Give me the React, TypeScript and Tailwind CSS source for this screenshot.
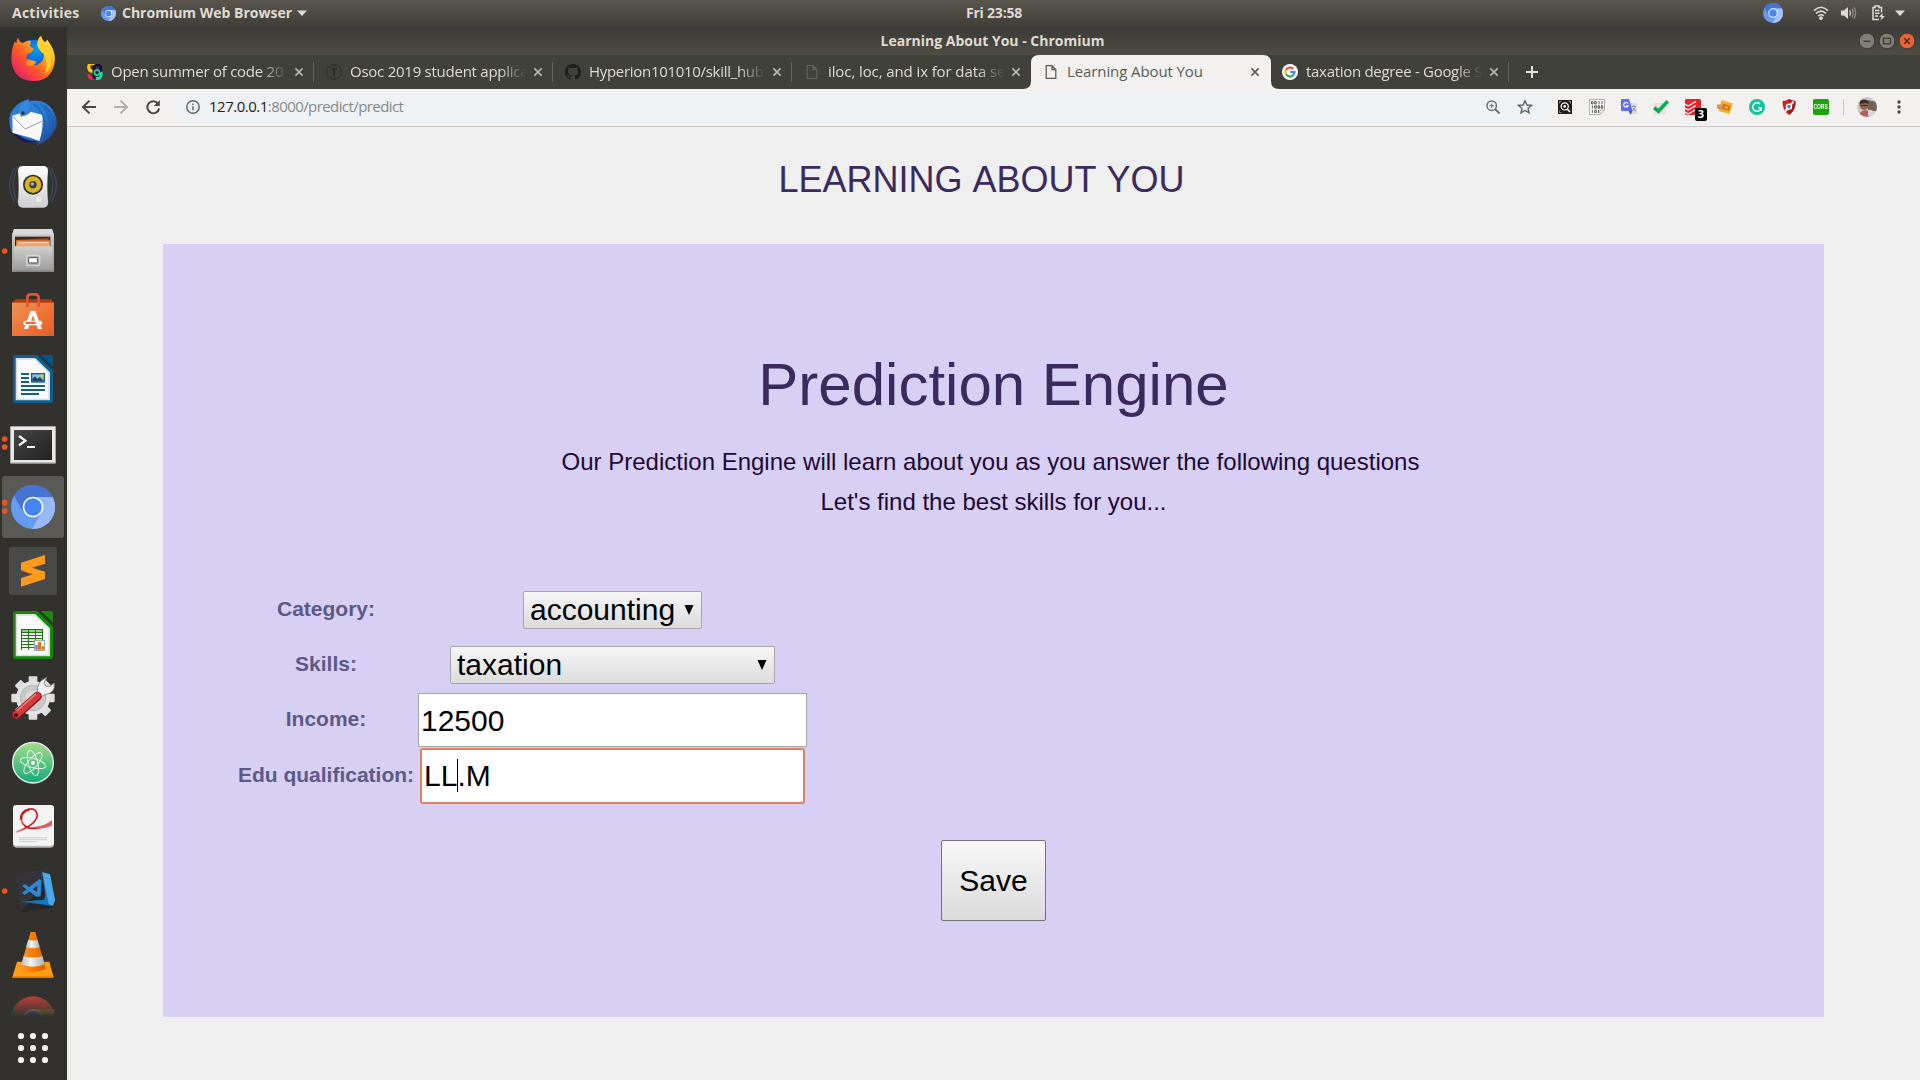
import React from "react";

const ubuntu = "font-['Open_Sans','Noto_Sans',sans-serif]";
const arial = "font-['Liberation_Sans',Arial,sans-serif]";

function ChromiumMark({ className }: { className: string }) {
  return (
    <svg viewBox="0 0 132 132" className={className}>
      <circle cx="66" cy="66" r="66" fill="#669bf2" />
      <path d="M9 32 A66 66 0 0 1 125 36 H66 L37 82Z" fill="#4674d3" />
      <path d="M125 36 A66 66 0 0 1 63 132 L93 80 L77 36Z" fill="#a4c3f8" />
      <circle cx="66" cy="66" r="31" fill="#fff" />
      <circle cx="66" cy="66" r="25" fill="#4786f0" />
    </svg>
  );
}

function Slot({ dots = [], active = false, children }: { dots?: number[]; active?: boolean; children: React.ReactNode }) {
  return (
    <svg viewBox="0 0 201 192" className="block h-16 w-[67px] shrink-0">
      {active && <rect x="6" y="3" width="186" height="186" rx="10" fill="#5a5954" />}
      {dots.map((y) => (
        <circle key={y} cx="14" cy={y} r="8.5" fill="#e95420" />
      ))}
      {children}
    </svg>
  );
}

function Doc({ a, b, children }: { a: string; b: string; children: React.ReactNode }) {
  return (
    <>
      <path d="M47 24 H112 L159 70 V160 Q159 168 151 168 H47 Q39 168 39 160 V32 Q39 24 47 24Z" fill={a} />
      <path d="M122 24 H154 Q159 24 159 29 V60 Z" fill={b} />
      <path d="M112 24 H122 L159 60 V70Z" fill="#33312d" />
      <path d="M47 33 H106 L150 76 V160 H47Z" fill="#dcdcdc" />
      <path d="M52 38 H104 L145 78 V155 H52Z" fill="#fafafa" />
      {children}
    </>
  );
}

function Dock() {
  return (
    <aside className="flex w-[67px] shrink-0 flex-col bg-[#33312d]">
      <Slot>
        <defs>
          <linearGradient id="ff" x1="1" y1="0" x2="0.1" y2="0.9">
            <stop offset="0" stopColor="#fff44f" />
            <stop offset="0.35" stopColor="#ffb01a" />
            <stop offset="0.65" stopColor="#ff5a2b" />
            <stop offset="1" stopColor="#e8196b" />
          </linearGradient>
          <radialGradient id="ffb" cx="0.6" cy="0.3" r="0.7">
            <stop offset="0" stopColor="#00a5f5" />
            <stop offset="0.6" stopColor="#0a5fd8" />
            <stop offset="1" stopColor="#39207c" />
          </radialGradient>
        </defs>
        <circle cx="99" cy="88" r="50" fill="url(#ffb)" />
        <path d="M50 48 Q49 38 54 32 Q58 46 70 48 Q80 40 93 42 L90 58 L101 66 L95 76 L82 82 L78 94 Q90 96 100 102 Q90 114 112 114 Q136 100 131 78 Q108 62 112 44 Q115 32 123 27 Q126 40 136 46 Q138 42 142 38 Q165 68 165 96 Q160 162 99 162 Q37 160 34 96 Q34 66 44 44Z" fill="url(#ff)" />
        <path d="M112 50 Q114 34 123 27 Q126 42 138 50 Q158 74 155 112 Q148 132 136 140 Q145 104 131 82 Q112 66 112 50Z" fill="#ffd52e" opacity=".8" />
        <path d="M78 106 Q92 94 110 104 Q98 122 80 113Z" fill="#ff9b1f" />
      </Slot>
      <Slot>
        <defs>
          <linearGradient id="tb" x1="0" y1="0" x2="1" y2="1">
            <stop offset="0" stopColor="#2d7dd2" />
            <stop offset="0.5" stopColor="#2a80d8" />
            <stop offset="1" stopColor="#1b3a83" />
          </linearGradient>
        </defs>
        <path d="M78 27 Q90 22 88 30 Q130 22 155 52 Q176 84 168 112 L158 126 L148 142 L128 154 L108 166 L118 154 Q60 160 36 124 Q22 96 32 66 Q48 36 78 27Z" fill="url(#tb)" />
        <path d="M37 74 L62 66 Q70 84 92 62 L128 72 Q130 118 118 150 Q82 136 38 126Z" fill="#f8f8f8" />
        <path d="M38 76 L76 114 L128 90" fill="none" stroke="#9a9a9a" strokeWidth="3" />
        <path d="M56 64 Q60 40 80 28 Q96 42 84 60 Q76 72 64 78Z" fill="#3289dd" />
        <path d="M100 40 Q140 60 136 140 M120 38 Q158 68 148 128 M134 44 Q166 74 160 112" fill="none" stroke="#1d5cab" strokeWidth="5" opacity=".7" />
        <circle cx="69" cy="66" r="5" fill="#3a2a18" />
        <path d="M38 126 Q52 130 70 140 Q90 152 118 150 Q66 168 38 126Z" fill="#221a55" />
      </Slot>
      <Slot>
        <defs>
          <linearGradient id="spk" x1="0" y1="0" x2="0" y2="1">
            <stop offset="0" stopColor="#ffffff" />
            <stop offset="1" stopColor="#cfcfcf" />
          </linearGradient>
        </defs>
        <path d="M44 40 Q14 90 44 140 M54 34 Q26 90 54 146 M154 40 Q184 90 154 140 M144 34 Q172 90 144 146" fill="none" stroke="#3e5a7c" strokeWidth="4" opacity=".6" />
        <path d="M68 33 H130 Q144 33 144 48 Q140 90 144 142 Q144 158 130 158 H68 Q54 158 54 142 Q58 90 54 48 Q54 33 68 33Z" fill="url(#spk)" />
        <circle cx="99" cy="89" r="30" fill="#2c2c2c" />
        <circle cx="99" cy="89" r="25" fill="#d6b422" />
        <circle cx="99" cy="89" r="11" fill="#3d3f42" />
        <circle cx="97" cy="87" r="5" fill="#9fb3c8" />
        <circle cx="116" cy="133" r="11" fill="#e9e9e9" stroke="#c2c2c2" strokeWidth="2" />
        <rect x="70" y="130" width="14" height="14" rx="3" fill="none" stroke="#d4d4d4" strokeWidth="2" />
      </Slot>
      <Slot dots={[96]}>
        <defs>
          <linearGradient id="cab" x1="0" y1="0" x2="0" y2="1">
            <stop offset="0" stopColor="#d0d0d0" />
            <stop offset="1" stopColor="#9b9b9b" />
          </linearGradient>
        </defs>
        <path d="M42 30 H156 L162 48 V158 H36 V48Z" fill="url(#cab)" />
        <path d="M42 30 H156 L161 46 H37Z" fill="#dadada" />
        <rect x="45" y="53" width="106" height="30" fill="#3a2a20" />
        <path d="M52 62 L146 58 V84 H52Z" fill="#b5471a" />
        <rect x="48" y="64" width="102" height="20" fill="#e8813a" />
        <rect x="54" y="70" width="92" height="3" fill="#fff" />
        <rect x="50" y="75" width="98" height="8" fill="#f5a55c" />
        <path d="M42 82 H156 V155 H42Z" fill="url(#cab)" />
        <rect x="80" y="109" width="39" height="31" rx="6" fill="#b3b3b3" stroke="#d5d5d5" strokeWidth="4" />
        <rect x="86" y="116" width="27" height="16" rx="2" fill="#fff" stroke="#4b4b4b" strokeWidth="3" />
        <rect x="38" y="154" width="122" height="5" fill="#858585" />
      </Slot>
      <Slot>
        <defs>
          <linearGradient id="bag" x1="0" y1="0" x2="1" y2="1">
            <stop offset="0" stopColor="#ea9456" />
            <stop offset="0.6" stopColor="#ee6f37" />
            <stop offset="1" stopColor="#e4602a" />
          </linearGradient>
        </defs>
        <path d="M46 49 H154 L162 60 H36Z" fill="#b13c13" />
        <rect x="36" y="59" width="126" height="100" fill="url(#bag)" />
        <path d="M82 72 V46 Q82 34 92 34 H106 Q116 34 116 46 V72" fill="none" stroke="#e4562a" strokeWidth="8" />
        <path d="M92 84 H106 L126 138 H114 L99 97 L84 138 H72Z" fill="#fff" />
        <rect x="70" y="113" width="57" height="14" rx="7" fill="#fff" />
        <rect x="76" y="117" width="32" height="6" rx="3" fill="#ec6a32" />
      </Slot>
      <Slot>
        <Doc a="#0b5f95" b="#04568f">
          <path d="M63 81 H87 M63 93 H87 M63 105 H87 M63 117 H135 M63 129 H135 M63 141 H117" stroke="#0d5f94" strokeWidth="6" />
          <rect x="95" y="80" width="38" height="25" fill="#87c4ec" stroke="#0d5f94" strokeWidth="4" />
          <path d="M97 103 V96 L105 88 L112 95 L120 90 L131 101 V103Z" fill="#23485f" />
          <circle cx="126" cy="87" r="5" fill="#f1c232" />
        </Doc>
      </Slot>
      <Slot dots={[84, 108]}>
        <defs>
          <linearGradient id="term" x1="0" y1="0" x2="1" y2="1">
            <stop offset="0" stopColor="#474747" />
            <stop offset="0.5" stopColor="#333" />
            <stop offset="1" stopColor="#222" />
          </linearGradient>
        </defs>
        <rect x="30" y="45" width="138" height="113" rx="3" fill="#a9a9a9" />
        <rect x="33" y="48" width="132" height="106" fill="#e8e8e8" />
        <rect x="42" y="57" width="114" height="90" fill="url(#term)" />
        <path d="M57 75 L76 89 L57 103" fill="none" stroke="#f5f5f5" strokeWidth="7" />
        <rect x="81" y="105" width="24" height="6" fill="#f5f5f5" />
      </Slot>
      <Slot dots={[83, 108]} active>
        <circle cx="99" cy="96" r="66" fill="#669bf2" />
        <path d="M42 62 A66 66 0 0 1 158 66 H99 L70 112Z" fill="#4674d3" />
        <path d="M158 66 A66 66 0 0 1 96 162 L126 110 L110 66Z" fill="#98b9f6" />
        <circle cx="99" cy="96" r="31" fill="#fff" />
        <circle cx="99" cy="96" r="26" fill="#4585f3" />
      </Slot>
      <Slot>
        <rect x="27" y="24" width="144" height="144" rx="8" fill="#494949" />
        <path d="M63 94 L135 98 V108 L99 108Z" fill="#e5811a" />
        <path d="M63 71 L135 48 V74 L96 86 L135 98 V120 L63 143 V117 L102 105 L63 94Z" fill="#ff9a1f" />
      </Slot>
      <Slot>
        <Doc a="#178a05" b="#1a8a08">
          <rect x="63" y="78" width="66" height="63" fill="#157d07" />
          {[81, 90, 99, 108, 117, 126, 135].map((y) => (
            <g key={y} fill={y === 81 ? "#8fcc85" : "#fff"}>
              <rect x="66" y={y} width="18" height="6" />
              <rect x="87" y={y} width="18" height="6" />
              <rect x="108" y={y} width="18" height="6" />
            </g>
          ))}
          <rect x="103" y="112" width="31" height="30" fill="#fff" stroke="#888" strokeWidth="2.5" />
          <rect x="106" y="126" width="7" height="14" fill="#2f8fe0" />
          <rect x="114" y="117" width="9" height="23" fill="#ee6a1f" />
          <rect x="124" y="130" width="8" height="10" fill="#d4791a" />
        </Doc>
      </Slot>
      <Slot>
        {[0, 45, 90, 135].map((r) => (
          <rect key={r} x="86" y="28" width="26" height="130" rx="3" fill="#dedede" transform={`rotate(${r} 99 93)`} />
        ))}
        <circle cx="99" cy="93" r="51" fill="#e2e2e2" />
        <circle cx="99" cy="93" r="38" fill="#c9c9c9" stroke="#b3b3b3" strokeWidth="3" />
        <circle cx="99" cy="93" r="22" fill="#dcdcdc" />
        <path d="M112 76 Q110 42 140 32 L132 48 L138 58 L150 58 L162 48 Q168 78 132 84 L118 94 L106 84Z" fill="#f3f3f3" stroke="#8d8d8d" strokeWidth="3" />
        <path d="M112 88 L49 144" stroke="#8f1818" strokeWidth="27" strokeLinecap="round" />
        <path d="M111 87 L49 143" stroke="#d33a3c" strokeWidth="21" strokeLinecap="round" />
        <path d="M106 82 L52 131" stroke="#e8797a" strokeWidth="5" strokeLinecap="round" />
        <circle cx="48" cy="145" r="6" fill="#4a0d0d" />
      </Slot>
      <Slot>
        <defs>
          <linearGradient id="atom" x1="0" y1="0" x2="0" y2="1">
            <stop offset="0" stopColor="#a6dc8d" />
            <stop offset="1" stopColor="#13ab78" />
          </linearGradient>
        </defs>
        <circle cx="99" cy="95" r="61" fill="url(#atom)" stroke="#eaf7ef" strokeWidth="4" />
        <g fill="none" stroke="#e9f8ee" strokeWidth="2.8">
          <ellipse cx="99" cy="96" rx="39" ry="14" transform="rotate(15 99 96)" />
          <ellipse cx="99" cy="96" rx="39" ry="14" transform="rotate(75 99 96)" />
          <ellipse cx="99" cy="96" rx="39" ry="14" transform="rotate(-50 99 96)" />
        </g>
        <circle cx="99" cy="96" r="6" fill="#fff" />
      </Slot>
      <Slot>
        <defs>
          <linearGradient id="ribbon" x1="0" y1="0" x2="1" y2="0">
            <stop offset="0" stopColor="#e9a3a4" />
            <stop offset="0.3" stopColor="#c9171b" />
            <stop offset="0.7" stopColor="#c9171b" />
            <stop offset="1" stopColor="#e79a9b" />
          </linearGradient>
        </defs>
        <rect x="39" y="33" width="123" height="125" rx="10" fill="#b5b5b5" />
        <rect x="39" y="30" width="123" height="122" rx="10" fill="#f4f4f4" />
        <path d="M47 112 Q106 92 112 62 Q110 40 90 42 Q62 46 63 72 Q70 104 108 100 Q136 96 156 80" fill="none" stroke="url(#ribbon)" strokeWidth="5" />
        <path d="M63 74 Q62 50 88 43" fill="none" stroke="#c9171b" strokeWidth="7" />
        <path d="M90 96 Q128 98 156 76 V92 Q124 106 90 96Z" fill="#dc6265" />
        <path d="M57 128 H141 M57 134 H141 M57 140 H111" stroke="#c4c4c4" strokeWidth="2.5" />
      </Slot>
      <Slot dots={[96]}>
        <path d="M44 44 L134 30 L158 146 L62 160Z" fill="#27262b" />
        <path d="M44 44 L134 30 L140 60 L62 160Z" fill="#34333a" />
        <path d="M127 40 L150 46 L165 124 L158 140 L64 128 L132 122 L136 110Z" fill="#1078c0" />
        <path d="M127 40 L150 46 L165 124 L158 140 L146 136Z" fill="#4ba7ea" />
        <path d="M66 80 L74 76 L122 106 V112 L110 114Z M118 60 L124 64 L122 112 L110 114 L112 80 L74 108 L66 102Z" fill="#2a8ad6" />
      </Slot>
      <Slot>
        <defs>
          <linearGradient id="vlc" x1="0" y1="0" x2="1" y2="0">
            <stop offset="0" stopColor="#ff9b2e" />
            <stop offset="0.5" stopColor="#f57c00" />
            <stop offset="1" stopColor="#d86200" />
          </linearGradient>
          <linearGradient id="vlw" x1="0" y1="0" x2="1" y2="0">
            <stop offset="0" stopColor="#b9bfc2" />
            <stop offset="0.4" stopColor="#f4f4f4" />
            <stop offset="1" stopColor="#aab0b3" />
          </linearGradient>
        </defs>
        <path d="M51 116 H148 L160 160 V165 H38 V160Z" fill="#ff9d17" />
        <path d="M38 160 H160 V165 H38Z" fill="#e87b00" />
        <path d="M92 27 H106 L138 138 Q99 158 60 138Z" fill="url(#vlc)" />
        <path d="M85 50 Q99 55 112 50 L119 72 Q99 80 78 72Z" fill="url(#vlw)" />
        <path d="M71 99 Q99 108 127 99 L134 124 Q99 138 64 124Z" fill="url(#vlw)" />
      </Slot>
      <div className="h-[30px] w-[67px] shrink-0 overflow-hidden">
        <Slot>
          <defs>
            <linearGradient id="dockfade" x1="0" y1="0" x2="0" y2="1">
              <stop offset="0" stopColor="#33312d" stopOpacity=".1" />
              <stop offset="1" stopColor="#33312d" />
            </linearGradient>
          </defs>
          <circle cx="99" cy="94" r="66" fill="#c9453b" />
          <path d="M41 60 L66 100 H33 Q33 76 41 60Z" fill="#2d8a48" />
          <rect x="99" y="66" width="64" height="30" fill="#c09a2a" />
          <circle cx="99" cy="97" r="31" fill="#cfcfcf" />
          <circle cx="99" cy="97" r="25" fill="#3c6fc0" />
          <rect x="30" y="26" width="140" height="64" fill="url(#dockfade)" />
        </Slot>
      </div>
      <svg viewBox="0 0 67 63" className="block h-[63px] w-[67px] shrink-0">
        {[19, 31, 43].map((y) => [21, 33, 45].map((x) => <circle key={`${x}-${y}`} cx={x} cy={y} r="3.1" fill="#f2f2f0" />))}
      </svg>
    </aside>
  );
}

function PageGlyph({ color }: { color: string }) {
  return (
    <svg viewBox="0 0 16 16" className="h-4 w-4 shrink-0" fill="none" stroke={color} strokeWidth="1.3">
      <path d="M3.2 1.7 H9 L12.8 5.5 V14.3 H3.2Z M9 1.7 V5.5 H12.8" />
    </svg>
  );
}

function CloseX({ color }: { color: string }) {
  return (
    <svg viewBox="0 0 10 10" className="h-[10px] w-[10px] shrink-0" stroke={color} strokeWidth="1.6">
      <path d="M1.4 1.4 L8.6 8.6 M8.6 1.4 L1.4 8.6" />
    </svg>
  );
}

const osoc = (
  <svg viewBox="0 0 16 16" className="h-4 w-4 shrink-0" fill="none">
    <path d="M9 1.7 A3.6 3.6 0 0 0 2 4.5 Q2.5 7.5 6 7" stroke="#ffc61a" strokeWidth="3.2" />
    <path d="M14 8 Q15 13 12 14.5 H9" stroke="#17e0a2" strokeWidth="2.8" />
    <path d="M1.5 10 Q2 14.5 7 14.5" stroke="#f0254b" strokeWidth="3" />
    <path d="M7 6 V15" stroke="#1b0b45" strokeWidth="2.5" />
    <circle cx="10.5" cy="4.5" r="3.4" stroke="#1b0b45" strokeWidth="3" />
    <circle cx="10" cy="8.6" r="2.6" stroke="#17e0a2" strokeWidth="1.6" />
  </svg>
);
const tee = (
  <svg viewBox="0 0 16 16" className="h-4 w-4 shrink-0" fill="none" stroke="#2c2c29">
    <circle cx="8" cy="8" r="7.3" strokeWidth="1" />
    <path d="M5.3 5.2 H10.7 M8 5.2 V11.4" strokeWidth="1.8" />
  </svg>
);
const octocat = (
  <svg viewBox="0 0 16 16" className="h-4 w-4 shrink-0" fill="#1d1f21">
    <path d="M8 0C3.58 0 0 3.58 0 8c0 3.54 2.29 6.53 5.47 7.59.4.07.55-.17.55-.38 0-.19-.01-.82-.01-1.49-2.01.37-2.53-.49-2.69-.94-.09-.23-.48-.94-.82-1.13-.28-.15-.68-.52-.01-.53.63-.01 1.08.58 1.23.82.72 1.21 1.87.87 2.33.66.07-.52.28-.87.51-1.07-1.78-.2-3.64-.89-3.64-3.95 0-.87.31-1.59.82-2.15-.08-.2-.36-1.02.08-2.12 0 0 .67-.21 2.2.82a7.5 7.5 0 0 1 4 0c1.53-1.04 2.2-.82 2.2-.82.44 1.1.16 1.92.08 2.12.51.56.82 1.27.82 2.15 0 3.07-1.87 3.75-3.65 3.95.29.25.54.73.54 1.48 0 1.07-.01 1.93-.01 2.2 0 .21.15.46.55.38A8 8 0 0 0 16 8c0-4.42-3.58-8-8-8Z" />
  </svg>
);
const google = (
  <svg viewBox="0 0 16 16" className="h-4 w-4 shrink-0" fill="none" strokeWidth="2.2">
    <circle cx="8" cy="8" r="8" fill="#fff" />
    <path d="M11.3 4.9 A4.5 4.5 0 0 0 4.1 5.8" stroke="#ea4335" />
    <path d="M4.1 5.8 A4.5 4.5 0 0 0 4.1 10.2" stroke="#fbbc05" />
    <path d="M4.1 10.2 A4.5 4.5 0 0 0 11 11.4" stroke="#34a853" />
    <path d="M11 11.4 A4.5 4.5 0 0 0 12.5 8 H8.2" stroke="#4285f4" />
  </svg>
);

const tabs = [
  { icon: osoc, title: "Open summer of code 2019", cls: "tracking-[-0.25px]" },
  { icon: tee, title: "Osoc 2019 student applica", cls: "tracking-[-0.25px]" },
  { icon: octocat, title: "Hyperion101010/skill_hub:", cls: "tracking-[-0.3px]" },
  { icon: <PageGlyph color="#62625d" />, title: "iloc, loc, and ix for data sele", cls: "tracking-[-0.1px]" },
  { icon: <PageGlyph color="#5c5c58" />, title: "Learning About You", cls: "tracking-[-0.1px]", active: true },
  { icon: google, title: "taxation degree - Google S", cls: "tracking-[-0.3px]" },
];

function TabStrip() {
  return (
    <div className="flex h-[34px] shrink-0 items-stretch bg-[#41413c] pl-2">
      {tabs.map((t, i) => (
        <div
          key={t.title}
          className={
            t.active
              ? "relative flex w-[239px] items-center pr-[10px] pl-3"
              : "relative flex w-[239px] items-center pr-[10px] pl-3"
          }
        >
          {t.active && (
            <svg viewBox="0 0 256 34" className="absolute top-0 -left-2 h-[34px] w-64" fill="#f2f1ef">
              <path d="M0 34 Q8 34 8 26 V8 Q8 0 16 0 H240 Q248 0 248 8 V26 Q248 34 256 34Z" />
            </svg>
          )}
          <div className="relative flex">{t.icon}</div>
          <div
            className={
              t.active
                ? "relative ml-2 w-[178px] overflow-hidden pb-[2px] text-[15px] leading-5 whitespace-nowrap text-[#5b5b58]"
                : "ml-2 w-[178px] overflow-hidden [mask-image:linear-gradient(to_right,#000_84%,transparent_99%)] pb-[2px] text-[15px] leading-5 whitespace-nowrap text-[#dedbd2]"
            }
          >
            <span className={t.cls}>{t.title}</span>
          </div>
          <div className="relative ml-auto flex">
            <CloseX color={t.active ? "#5c5c58" : "#b9b8b0"} />
          </div>
          {!t.active && i !== 3 && <div className="absolute top-[7px] right-0 h-5 w-px bg-[#66665f]" />}
        </div>
      ))}
      <div className="flex items-center pl-[17px]">
        <svg viewBox="0 0 12 12" className="h-3 w-3" stroke="#e4e2da" strokeWidth="2">
          <path d="M6 0 V12 M0 6 H12" />
        </svg>
      </div>
    </div>
  );
}

function Extensions() {
  return (
    <div className="flex items-center gap-4">
      <svg viewBox="0 0 16 16" className="h-4 w-4">
        <rect x="1" y="1" width="14" height="14" fill="#1e1e1e" />
        <circle cx="7.7" cy="7.4" r="3.6" fill="none" stroke="#fff" strokeWidth="1.2" />
        <circle cx="7.7" cy="7.4" r="1.3" fill="#fff" />
        <path d="M10.3 10 L13 13" stroke="#fff" strokeWidth="1.6" />
        <path d="M2.5 4.5 V2.5 H4.5 M11.5 2.5 H13.5 V4.5 M2.5 11.5 V13.5 H4.5" stroke="#999" fill="none" strokeWidth=".8" />
      </svg>
      <svg viewBox="0 0 16 16" className="h-4 w-4">
        <path d="M0.5 0.5 H15.5 V11 L11 15.5 H0.5Z" fill="#fff" stroke="#9a9a9a" strokeWidth=".8" />
        <path d="M15 11 H11 V15" fill="none" stroke="#9a9a9a" strokeWidth=".8" />
        <g fill="none" stroke="#555" strokeWidth="1">
          <path d="M2.5 2.5 h1.6 v2.4 h-1.6z M5.7 2.5 h1.6 v2.4 h-1.6z M10 2 v3.3 M13 2 v3.3" />
          <path d="M3.3 6.4 v3.2 M5.7 6.8 h1.6 v2.4 h-1.6z M9 6.8 h1.6 v2.4 h-1.6z M12.2 6.8 h1.6 v2.4 h-1.6z" />
          <path d="M3.3 10.8 v3.2 M5.7 11.2 h1.6 v2.4 h-1.6z M9.5 10.8 v3.2" />
        </g>
      </svg>
      <svg viewBox="0 0 16 16" className="h-4 w-4">
        <path d="M6 4 H15 Q16 4 16 5 V14 Q16 15 15 15 H10Z" fill="#dcdcdc" />
        <path d="M0 1 Q0 0 1 0 H8 L11.5 12 H1 Q0 12 0 11Z" fill="#5b6ff0" />
        <path d="M7.5 12 H11.5 L9.5 15.8Z" fill="#3c4ac4" />
        <path d="M7 4.6 A2.3 2.3 0 1 0 7.2 6.5 H5.2" fill="none" stroke="#fff" strokeWidth="1.2" />
        <path d="M10.8 7.5 H15 M12.8 6.5 V7.5 M14.2 7.8 Q13 11 11.5 12 M12 9 Q13 11.5 15 12" fill="none" stroke="#78909c" strokeWidth=".9" />
      </svg>
      <svg viewBox="0 0 16 16" className="h-4 w-4">
        <rect x="0.5" y="4" width="12" height="11.5" rx="1" fill="#e3e2dc" />
        <path d="M1.2 8.6 L5.4 12.2 L14.8 2.2" fill="none" stroke="#07b04b" strokeWidth="3.6" />
      </svg>
      <div className="relative h-4 w-4">
        <svg viewBox="0 0 16 16" className="h-4 w-4">
          <rect width="16" height="16" rx="1.5" fill="#e8202b" />
          <path d="M0 5 L3 7 L11 2.5 M0 9 L3 11 L11 6.5 M0 13 L3 15 L11 10.5" fill="none" stroke="#fff" strokeWidth="1.4" />
        </svg>
        <div className="absolute top-[9px] left-[10px] flex h-[13px] w-3 items-center justify-center rounded-[2px] bg-black font-['Open_Sans',sans-serif] text-[11px] font-bold text-white">
          3
        </div>
      </div>
      <svg viewBox="0 0 16 16" className="h-4 w-4">
        <path d="M4.5 1 L15.8 4.5 L12.5 15 L2 12Z" fill="#f5b21e" />
        <path d="M0 5.5 H7 L8 8 L5 11 L0 9.5Z" fill="#e09058" />
        <path d="M7 5.8 L12.5 7.5 L11.5 11 L6 9.4Z" fill="none" stroke="#c8621b" strokeWidth="1.3" />
      </svg>
      <svg viewBox="0 0 16 16" className="h-4 w-4">
        <circle cx="8" cy="8" r="8" fill="#15c39a" />
        <path d="M11 4.9 A4.3 4.3 0 1 0 12.2 8.9 H9.2 M12.3 8.9 V11.8" fill="none" stroke="#fff" strokeWidth="1.4" />
      </svg>
      <svg viewBox="0 0 16 16" className="h-4 w-4">
        <path d="M8 0 Q11 1.8 14.5 2 Q15 11.5 8 16 Q1 11.5 1.5 2 Q5 1.8 8 0Z" fill="#d3221d" />
        <path d="M8 0 Q11 1.8 14.5 2 Q15 11.5 8 16Z" fill="#a81512" />
        <path d="M12.5 2.5 L3.5 13" stroke="#f0efed" strokeWidth="2.2" />
        <circle cx="8" cy="7.6" r="3.2" fill="#fff" />
        <circle cx="8" cy="7.6" r="1.8" fill="#3f7be0" />
      </svg>
      <div className="flex h-4 w-4 items-center justify-center rounded-[2px] bg-[#1ca30b] font-['Liberation_Sans',sans-serif]">
        <span className="scale-x-[0.62] text-[8px] font-bold text-white">CORS</span>
      </div>
    </div>
  );
}

function Toolbar() {
  return (
    <div className="flex h-[38px] shrink-0 items-center border-b border-[#cdcbc8] bg-[#f2f1ef] pb-[2px] pl-[14px]">
      <svg viewBox="0 0 80 16" className="h-4 w-20 shrink-0" fill="none" strokeWidth="2">
        <path d="M15 8 H2.5 M8.5 1.6 L2 8 L8.5 14.4" stroke="#494949" />
        <path d="M33 8 H45.5 M39.5 1.6 L46 8 L39.5 14.4" stroke="#b1b0ae" />
        <path d="M77 4.4 A6 6 0 1 0 78.2 9.5" stroke="#494949" />
        <path d="M78.8 1 V7 H72.8Z" fill="#494949" />
      </svg>
      <div className="ml-[14px] flex h-8 w-[1370px] shrink-0 items-center rounded-full bg-[#eef2f4] pl-[11px]">
        <svg viewBox="0 0 14 14" className="h-[14px] w-[14px]" fill="none" stroke="#5f6368">
          <circle cx="7" cy="7" r="6.2" strokeWidth="1.4" />
          <path d="M7 6.2 V10.3 M7 3.4 V5" strokeWidth="1.5" />
        </svg>
        <div className={`${ubuntu} ml-[9px] pb-px text-[15px] leading-5 tracking-[-0.58px] text-[#85898c]`}>
          <span className="tracking-[-0.5px] text-[#1f2123]">127.0.0.1</span>:8000/predict/predict
        </div>
        <div className="ml-auto flex items-center gap-4 pr-3">
          <svg viewBox="0 0 16 16" className="h-4 w-4" fill="none" stroke="#6a6d70" strokeWidth="1.5">
            <circle cx="6.7" cy="6.7" r="4.7" />
            <path d="M10 10 L14.5 14.5" strokeWidth="1.8" />
            <path d="M4.4 6.7 H9 M6.7 4.4 V9" strokeWidth="1.1" />
          </svg>
          <svg viewBox="0 0 16 16" className="h-4 w-4" fill="none" stroke="#5f6368" strokeWidth="1.4">
            <path d="M8 1.8 L9.9 6 L14.4 6.4 L11 9.4 L12 13.9 L8 11.5 L4 13.9 L5 9.4 L1.6 6.4 L6.1 6Z" />
          </svg>
        </div>
      </div>
      <div className="ml-3">
        <Extensions />
      </div>
      <div className="ml-[14px] h-4 w-px bg-[#cbcac8]" />
      <svg viewBox="0 0 20 20" className="ml-[13px] h-5 w-5">
        <defs>
          <clipPath id="face">
            <circle cx="10" cy="10" r="10" />
          </clipPath>
        </defs>
        <g clipPath="url(#face)">
          <rect width="20" height="20" fill="#cfccc8" />
          <path d="M11 3 L20 5 V14 H11Z" fill="#6d6a55" />
          <path d="M1 20 Q3 13 9 13 Q14 14 13 20Z" fill="#b0635c" />
          <path d="M11 13 Q16 11 20 20 H11Z" fill="#d3d6da" />
          <circle cx="7.2" cy="8.3" r="4.6" fill="#8f6450" />
          <path d="M2.4 7.5 Q2.4 2.2 7.6 2.4 Q12 2.6 11.8 7.2 Q8 4.5 2.4 7.5Z" fill="#3a2f2b" />
          <path d="M3.6 8.5 H10.8" stroke="#3a2f2b" strokeWidth="1.1" />
          <circle cx="14" cy="9.5" r="2.6" fill="#80584a" />
        </g>
      </svg>
      <svg viewBox="0 0 4 16" className="ml-5 h-4 w-1" fill="#4a4a48">
        <circle cx="2" cy="3" r="1.7" />
        <circle cx="2" cy="8" r="1.7" />
        <circle cx="2" cy="13" r="1.7" />
      </svg>
    </div>
  );
}

function TopBar() {
  return (
    <header
      className={`${ubuntu} grid h-[27px] shrink-0 grid-cols-[1fr_auto_1fr] items-center bg-linear-to-b from-[#5a564e] to-[#403e39] text-[14px] leading-5 font-bold text-[#dfdbd2]`}
    >
      <div className="flex items-center pb-px pl-3">
        <span className="w-[89px] tracking-[0.25px]">Activities</span>
        <ChromiumMark className="h-[15px] w-[15px]" />
        <span className="ml-[6px]">Chromium Web Browser</span>
        <svg viewBox="0 0 10 6" className="ml-[5px] h-[6px] w-[10px]" fill="#dfdbd2">
          <path d="M0 0.5 H10 L5 6Z" />
        </svg>
      </div>
      <span className="pb-px pl-[68px] tracking-[-0.2px]">Fri 23:58</span>
      <div className="flex items-center justify-end pr-[15px] pb-px">
        <ChromiumMark className="mr-[30px] h-5 w-5" />
        <svg viewBox="0 0 16 14" className="h-[14px] w-4" fill="none" stroke="#dfdbd2" strokeWidth="1.5">
          <path d="M1 4.6 Q8 -2 15 4.6 M3 7.4 Q8 2.8 13 7.4" />
          <path d="M5.2 9.8 Q8 7.6 10.8 9.8" />
          <circle cx="8" cy="12.2" r="1.1" fill="#dfdbd2" />
        </svg>
        <svg viewBox="0 0 16 14" className="ml-3 h-[14px] w-4">
          <path d="M0 4.5 H3 L7 1 V13 L3 9.5 H0Z" fill="#dfdbd2" />
          <path d="M8.8 4.5 Q10.3 7 8.8 9.5" fill="none" stroke="#dfdbd2" strokeWidth="1.3" />
          <path d="M11 2.8 Q13.3 7 11 11.2 M13 1.4 Q16.3 7 13 12.6" fill="none" stroke="#8e8b84" strokeWidth="1.3" />
        </svg>
        <svg viewBox="0 0 15 16" className="ml-[14px] h-4 w-[15px]" fill="none" stroke="#dfdbd2" strokeWidth="1.5">
          <path d="M8 14.5 H2 V2.5 H4 V1 H8 V2.5 H10.5 V7.5" />
          <path d="M4 5.5 H8.5 M4 8.2 H8.5 M4 11 H7" />
          <path d="M11.5 8 L8 12 H10.5 L9.5 15.5 L14 11 H11.5Z" fill="#dfdbd2" stroke="none" />
        </svg>
        <svg viewBox="0 0 10 6" className="ml-[9px] h-[6px] w-[10px]" fill="#dfdbd2">
          <path d="M0 0.5 H10 L5 6Z" />
        </svg>
      </div>
    </header>
  );
}

function TitleBar() {
  return (
    <div className={`${ubuntu} relative flex h-7 shrink-0 items-center justify-center bg-linear-to-b from-[#3b3a36] to-[#504d46] text-[14px] leading-5 font-bold text-[#dfdbd2]`}>
      <span className="-ml-[2px]">Learning About You - Chromium</span>
      <svg viewBox="0 0 60 18" className="absolute top-[5px] right-[3px] h-[18px] w-[60px]" fill="none">
        <circle cx="10" cy="9" r="7.8" fill="#807e76" stroke="#33322e" strokeWidth=".8" />
        <path d="M6.5 9.3 H13.5" stroke="#3a3935" strokeWidth="1.3" />
        <circle cx="30" cy="9" r="7.8" fill="#807e76" stroke="#33322e" strokeWidth=".8" />
        <rect x="26.5" y="6.2" width="7" height="5.6" stroke="#3a3935" strokeWidth="1.2" />
        <circle cx="50" cy="9" r="7.8" fill="#ea6237" stroke="#33322e" strokeWidth=".8" />
        <path d="M47.3 6.3 L52.7 11.7 M52.7 6.3 L47.3 11.7" stroke="#4a2213" strokeWidth="1.3" />
      </svg>
    </div>
  );
}

const field = "border-[#a6a6a6] bg-linear-to-b from-[#f6f6f6] to-[#dcdcdc]";
const label = "pb-[2px] text-[21px] font-bold text-[#5c5a88]";

function PredictionPage() {
  return (
    <main className={`${arial} flex flex-1 flex-col overflow-hidden bg-[#efefef]`}>
      <h2 className="mt-[31px] pr-6 text-center text-[36px] leading-[44px] text-[#3b2a5e] [font-kerning:none]">LEARNING ABOUT YOU</h2>
      <section className="mt-[42px] mr-24 ml-24 h-[773px] bg-[#d8cff4]">
        <h1 className="pt-[106px] text-center text-[60px] leading-[70px] text-[#3b2a5e]">Prediction Engine</h1>
        <p className="mt-[22px] pr-[6px] text-center text-[24px] leading-10 text-[#1e0836]">
          Our Prediction Engine will learn about you as you answer the following questions
          <br />
          <span className="pl-[6px]">Let&apos;s find the best skills for you...</span>
        </p>
        <form className="mt-[60px] ml-[74px] grid w-[573px] grid-cols-[178px_395px] grid-rows-[55px_55px_55px_57px] place-items-center text-[30px] text-black">
          <label className={label}>Category:</label>
          <div className={`${field} flex h-[38px] w-[179px] items-center justify-between rounded-[2px] border pr-[7px] pl-[6px]`}>
            <span>accounting</span>
            <svg viewBox="0 0 10 10" className="h-[10px] w-[10px]">
              <path d="M0.5 0 H9.5 L5 10Z" />
            </svg>
          </div>
          <label className={label}>Skills:</label>
          <div className={`${field} flex h-[38px] w-[325px] items-center justify-between rounded-[2px] border pr-[7px] pl-[6px]`}>
            <span>taxation</span>
            <svg viewBox="0 0 10 10" className="h-[10px] w-[10px]">
              <path d="M0.5 0 H9.5 L5 10Z" />
            </svg>
          </div>
          <label className={label}>Income:</label>
          <div className="flex h-[54px] w-[389px] items-center border border-[#a6a6a6] bg-white pt-px pl-[2px]">12500</div>
          <label className={label}>Edu qualification:</label>
          <div className="flex h-[56px] w-[385px] items-center rounded-[3px] border-2 border-[#e67e60] bg-white pl-[2px]">
            <span>LL</span>
            <span className="-mr-px h-[33px] w-px bg-black" />
            <span>.M</span>
          </div>
        </form>
        <div className="mt-9 flex justify-center">
          <button type="button" className="h-[81px] w-[105px] rounded-[2px] border border-[#767676] bg-linear-to-b from-[#f8f8f8] to-[#dadada] text-[30px] text-black">
            Save
          </button>
        </div>
      </section>
    </main>
  );
}

export default function App() {
  return (
    <div className="flex h-[1080px] w-[1920px] flex-col overflow-hidden">
      <TopBar />
      <div className="flex min-h-0 flex-1">
        <Dock />
        <div className="flex min-w-0 flex-1 flex-col">
          <TitleBar />
          <div className={ubuntu}>
            <TabStrip />
          </div>
          <Toolbar />
          <PredictionPage />
        </div>
      </div>
    </div>
  );
}
